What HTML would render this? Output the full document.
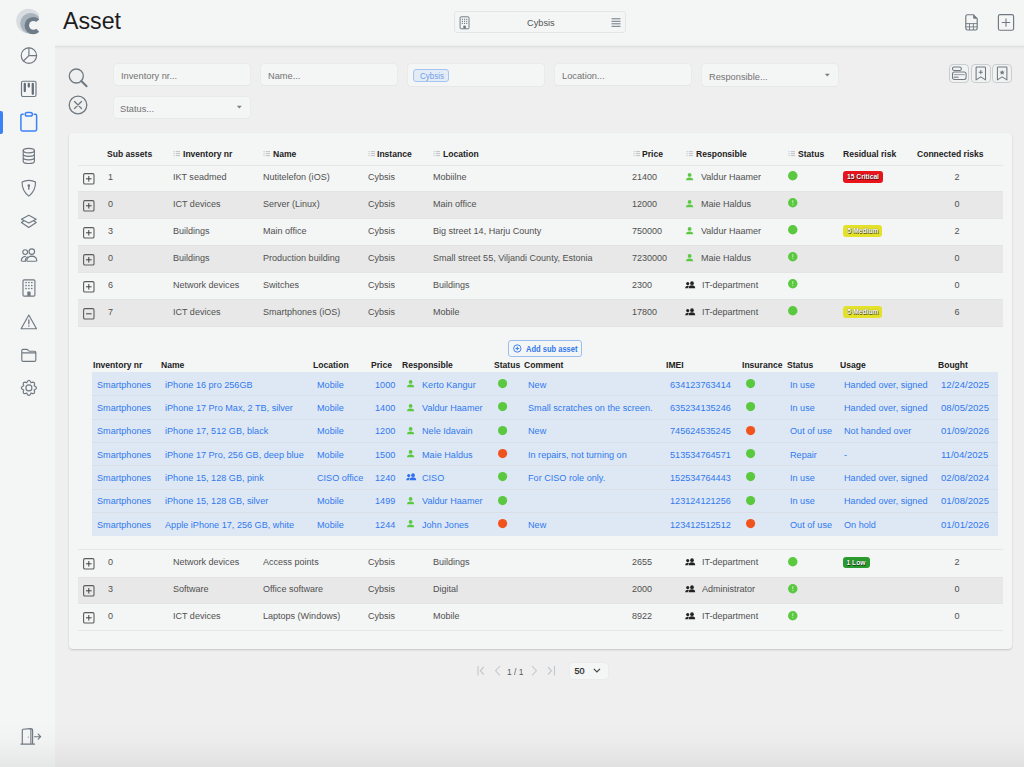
<!DOCTYPE html><html><head><meta charset="utf-8"><style>
html,body{margin:0;padding:0;}
body{width:1024px;height:767px;overflow:hidden;position:relative;background:#efefef;font-family:"Liberation Sans", sans-serif;}
.t{position:absolute;white-space:nowrap;line-height:1;}
svg{display:block}
</style></head><body>
<div style="position:absolute;left:0px;top:0px;width:1024px;height:46.5px;background:#f4f5f5;"></div>
<div style="position:absolute;left:55px;top:43px;width:969px;height:6px;background:linear-gradient(rgba(0,0,0,0) 0%,rgba(0,0,0,0.02) 40%,#dfdfdf 58%,#eaeaea 80%,rgba(239,239,239,0) 100%);"></div>
<div style="position:absolute;left:0px;top:0px;width:55px;height:767px;background:#f4f5f5;"></div>
<div style="position:absolute;left:0px;top:722px;width:1024px;height:45px;background:linear-gradient(rgba(0,0,0,0),rgba(0,0,0,0.012) 40%,rgba(0,0,0,0.06));"></div>
<svg style="position:absolute;left:0px;top:0px;overflow:visible" width="55" height="46" viewBox="0 0 55 46">
<defs><clipPath id="lc"><rect x="0" y="0" width="38.9" height="46"/></clipPath></defs>
<g clip-path="url(#lc)">
<circle cx="28.5" cy="21" r="12.3" fill="#d9dde1"/>
<circle cx="30.6" cy="23.3" r="10.4" fill="#a9b3bc"/>
<circle cx="33.2" cy="25.6" r="8.6" fill="#6e7c89"/>
<circle cx="33.4" cy="25.4" r="4.3" fill="#f4f5f5"/>
<polygon points="33.4,25.4 36.6,21.6 39.5,19.4 39.5,31.9 36.8,29.2" fill="#f4f5f5"/>
</g></svg>
<div style="position:absolute;left:0px;top:111px;width:3px;height:23px;background:#3b82f6;border-radius:0 2px 2px 0;"></div>
<svg style="position:absolute;left:20px;top:47px;overflow:visible" width="18" height="18" viewBox="0 0 18 18"><g fill="none" stroke="#6f7981" stroke-width="1.15" stroke-linecap="round" stroke-linejoin="round"><circle cx="8.9" cy="8.6" r="7.7"/><path d="M8.9 0.9V8.6H16.6M8.9 8.6L3.4 14"/></g></svg>
<svg style="position:absolute;left:20px;top:80px;overflow:visible" width="18" height="18" viewBox="0 0 18 18"><g fill="none" stroke="#6f7981" stroke-width="1.15" stroke-linecap="round" stroke-linejoin="round"><rect x="1.5" y="1.2" width="14.5" height="15.3" rx="1.5"/></g><g stroke="#66707a" stroke-width="2.3" stroke-linecap="round"><path d="M4.8 3.9V11M8.8 3.9V6.6M12.8 3.9V13.8"/></g></svg>
<svg style="position:absolute;left:19px;top:111px;overflow:visible" width="20" height="22" viewBox="0 0 20 22"><g fill="none" stroke="#3b82f6" stroke-width="1.5" stroke-linecap="round" stroke-linejoin="round"><path d="M4.2 3.2H3.2Q1.9 3.2 1.9 4.6V18.6Q1.9 20 3.3 20H16.2Q17.6 20 17.6 18.6V4.6Q17.6 3.2 16.3 3.2H15.2"/><rect x="6.2" y="1.4" width="7.2" height="3.6" rx="1.8"/></g></svg>
<svg style="position:absolute;left:20px;top:146px;overflow:visible" width="18" height="20" viewBox="0 0 18 20"><g fill="none" stroke="#6f7981" stroke-width="1.15" stroke-linecap="round" stroke-linejoin="round"><ellipse cx="8.8" cy="4.6" rx="5.6" ry="2.3"/><path d="M3.2 4.6V15.2Q3.2 17.5 8.8 17.5Q14.4 17.5 14.4 15.2V4.6M3.2 8.1Q3.2 10.4 8.8 10.4Q14.4 10.4 14.4 8.1M3.2 11.6Q3.2 13.9 8.8 13.9Q14.4 13.9 14.4 11.6"/></g></svg>
<svg style="position:absolute;left:20px;top:178px;overflow:visible" width="18" height="20" viewBox="0 0 18 20"><g fill="none" stroke="#6f7981" stroke-width="1.15" stroke-linecap="round" stroke-linejoin="round"><path d="M8.8 2.3Q12.5 2.3 15.5 4Q15.8 12.6 8.8 18.1Q1.8 12.6 2.1 4Q5.1 2.3 8.8 2.3Z"/></g><circle cx="8.8" cy="7.6" r="1.3" fill="#6f7981"/><rect x="8.1" y="7.8" width="1.4" height="4" rx="0.6" fill="#6f7981"/></svg>
<svg style="position:absolute;left:20px;top:213px;overflow:visible" width="18" height="18" viewBox="0 0 18 18"><g fill="none" stroke="#6f7981" stroke-width="1.15" stroke-linecap="round" stroke-linejoin="round"><path d="M8.8 2.3L16.2 6.2L8.8 10.1L1.4 6.2Z"/><path d="M3.6 7.9L1.4 9.4L8.8 14.4L16.2 9.4L14 7.9"/></g></svg>
<svg style="position:absolute;left:20px;top:246px;overflow:visible" width="18" height="18" viewBox="0 0 18 18"><g fill="none" stroke="#6f7981" stroke-width="1.15" stroke-linecap="round" stroke-linejoin="round"><circle cx="5.2" cy="6.1" r="2.4"/><circle cx="11.8" cy="5.6" r="2.8"/><path d="M5.4 10.4Q1.9 10.7 1.3 14.1Q1.2 15.2 2.3 15.2H5.6Q5 14.2 5.6 13Q6.2 11.4 7.2 10.9"/><path d="M7.6 15.2H15.8Q16.9 15.2 16.8 14.1Q16.1 10.2 11.8 10.1Q7.5 10.2 6.8 14.1Q6.7 15.2 7.6 15.2Z"/></g></svg>
<svg style="position:absolute;left:20px;top:278px;overflow:visible" width="18" height="20" viewBox="0 0 18 20"><g fill="none" stroke="#6f7981" stroke-width="1.15" stroke-linecap="round" stroke-linejoin="round"><rect x="3" y="1.8" width="11.9" height="16.3" rx="1.1"/></g><g fill="#6f7981"><rect x="5.30" y="3.90" width="1.5" height="1.3"/><rect x="5.30" y="6.90" width="1.5" height="1.3"/><rect x="5.30" y="9.90" width="1.5" height="1.3"/><rect x="8.15" y="3.90" width="1.5" height="1.3"/><rect x="8.15" y="6.90" width="1.5" height="1.3"/><rect x="8.15" y="9.90" width="1.5" height="1.3"/><rect x="11.00" y="3.90" width="1.5" height="1.3"/><rect x="11.00" y="6.90" width="1.5" height="1.3"/><rect x="11.00" y="9.90" width="1.5" height="1.3"/><rect x="7.3" y="13.6" width="3.3" height="4.3"/></g></svg>
<svg style="position:absolute;left:20px;top:313px;overflow:visible" width="18" height="18" viewBox="0 0 18 18"><g fill="none" stroke="#6f7981" stroke-width="1.15" stroke-linecap="round" stroke-linejoin="round"><path d="M8.8 2L16.5 15.7H1.1Z"/></g><rect x="8.2" y="6.2" width="1.3" height="5.2" rx="0.6" fill="#6f7981"/><circle cx="8.85" cy="13" r="0.8" fill="#6f7981"/></svg>
<svg style="position:absolute;left:20px;top:347px;overflow:visible" width="18" height="16" viewBox="0 0 18 16"><g fill="none" stroke="#6f7981" stroke-width="1.15" stroke-linecap="round" stroke-linejoin="round"><path d="M1.8 3.6Q1.8 2.4 3 2.4H6.6Q7.5 2.4 8.4 3.6Q9 4.2 9.8 4.2H14.6Q15.8 4.2 15.8 5.4V13.2Q15.8 14.4 14.6 14.4H3Q1.8 14.4 1.8 13.2Z M1.8 5.8H15.8"/></g></svg>
<svg style="position:absolute;left:20px;top:379px;overflow:visible" width="18" height="18" viewBox="0 0 18 18"><g fill="none" stroke="#6f7981" stroke-width="1.15" stroke-linecap="round" stroke-linejoin="round"><path d="M8.90 1.30 L10.25 2.13 L11.04 3.73 L12.73 3.16 L14.27 3.53 L14.64 5.07 L14.07 6.76 L15.67 7.55 L16.50 8.90 L15.67 10.25 L14.07 11.04 L14.64 12.73 L14.27 14.27 L12.73 14.64 L11.04 14.07 L10.25 15.67 L8.90 16.50 L7.55 15.67 L6.76 14.07 L5.07 14.64 L3.53 14.27 L3.16 12.73 L3.73 11.04 L2.13 10.25 L1.30 8.90 L2.13 7.55 L3.73 6.76 L3.16 5.07 L3.53 3.53 L5.07 3.16 L6.76 3.73 L7.55 2.13Z"/><circle cx="8.9" cy="8.9" r="3"/></g></svg>
<svg style="position:absolute;left:19px;top:726px;overflow:visible" width="24" height="22" viewBox="0 0 24 22"><g fill="none" stroke="#6f7981" stroke-width="1.15" stroke-linecap="round" stroke-linejoin="round"><path d="M3.3 18.1V4Q3.3 3.4 3.9 3.3L11.6 2.6Q13.6 2.5 13.6 4.4V18.1M1.9 18.1H15.6M11.9 18.1V3.1"/><path d="M15.4 10.7H21.6M19.2 8.2L21.7 10.7L19.2 13.2"/></g><circle cx="9.3" cy="11" r="0.6" fill="#6f7981"/></svg>
<div class="t" style="left:63.0px;top:9.96px;font-size:23.2px;color:#1d1d1d;font-weight:400;">Asset</div>
<div style="position:absolute;left:454.3px;top:11.3px;width:172.2px;height:21.7px;background:#f4f5f5;border:1px solid #e3e5e6;border-radius:3px;box-sizing:border-box;"></div>
<svg style="position:absolute;left:459px;top:16px;overflow:visible" width="12" height="14" viewBox="0 0 12 14"><rect x="1.1" y="0.8" width="8.9" height="12" rx="0.9" fill="none" stroke="#6f7981" stroke-width="0.95"/><rect x="2.85" y="2.75" width="1.1" height="1.1" fill="#6f7981"/><rect x="2.85" y="4.80" width="1.1" height="1.1" fill="#6f7981"/><rect x="2.85" y="6.85" width="1.1" height="1.1" fill="#6f7981"/><rect x="5.00" y="2.75" width="1.1" height="1.1" fill="#6f7981"/><rect x="5.00" y="4.80" width="1.1" height="1.1" fill="#6f7981"/><rect x="5.00" y="6.85" width="1.1" height="1.1" fill="#6f7981"/><rect x="7.15" y="2.75" width="1.1" height="1.1" fill="#6f7981"/><rect x="7.15" y="4.80" width="1.1" height="1.1" fill="#6f7981"/><rect x="7.15" y="6.85" width="1.1" height="1.1" fill="#6f7981"/><path d="M4.3 12.4V10.6Q4.3 9.6 5.6 9.6Q6.9 9.6 6.9 10.6V12.4Z" fill="#6f7981"/></svg>
<div class="t" style="left:526.6px;top:17.70px;font-size:9.8px;color:#555;font-weight:400;transform:scaleX(0.94);transform-origin:0 0;">Cybsis</div>
<svg style="position:absolute;left:610px;top:17px;overflow:visible" width="12" height="12" viewBox="0 0 12 12"><g stroke="#6f7981" stroke-width="1"><path d="M1.5 1.8H10.5M1.5 4.3H10.5M1.5 6.8H10.5M1.5 9.3H10.5"/></g></svg>
<svg style="position:absolute;left:964px;top:13px;overflow:visible" width="16" height="19" viewBox="0 0 16 19"><g fill="none" stroke="#6f7981" stroke-width="1.15" stroke-linecap="round" stroke-linejoin="round"><path d="M1.8 3.4Q1.8 1.7 3.5 1.7H9.3L13.2 5.6V15.3Q13.2 17 11.5 17H3.5Q1.8 17 1.8 15.3Z"/></g><g fill="none" stroke="#6f7981" stroke-width="0.9"><path d="M1.8 10.6H13.2M1.8 13.9H13.2M5.5 10.6V17M9.4 10.6V17"/></g><path d="M9.1 1.8L13.1 5.8H10.4Q9.1 5.8 9.1 4.5Z" fill="#6f7981"/></svg>
<svg style="position:absolute;left:997px;top:13px;overflow:visible" width="19" height="19" viewBox="0 0 19 19"><g fill="none" stroke="#6f7981" stroke-width="1.15" stroke-linecap="round" stroke-linejoin="round"><rect x="1.4" y="1.6" width="15.2" height="15.6" rx="1.8"/></g><g stroke="#6f7981" stroke-width="1.05" stroke-linecap="round"><path d="M9 5.7V13.3M5.2 9.5H12.8"/></g></svg>
<svg style="position:absolute;left:66px;top:66px;overflow:visible" width="24" height="24" viewBox="0 0 24 24"><g fill="none" stroke="#6f7981" stroke-width="1.3" stroke-linecap="round"><circle cx="10.3" cy="10" r="7"/><path d="M15.3 15L20.6 20.3" stroke-width="2"/></g></svg>
<svg style="position:absolute;left:66px;top:94px;overflow:visible" width="24" height="24" viewBox="0 0 24 24"><g fill="none" stroke="#6f7981" stroke-width="1.3" stroke-linecap="round"><circle cx="12" cy="11" r="8.8"/><path d="M8.5 7.5L15.5 14.5M15.5 7.5L8.5 14.5"/></g></svg>
<div style="position:absolute;left:113.5px;top:63.8px;width:136.9px;height:21.5px;background:#f4f5f5;border-radius:3px;box-shadow:0 0 0 0.6px #e4e6e7, 0 1px 1px rgba(0,0,0,0.03);"></div>
<div class="t" style="left:120.5px;top:70.86px;font-size:9.5px;color:#737373;font-weight:400;transform:scaleX(0.975);transform-origin:0 0;">Inventory nr...</div>
<div style="position:absolute;left:260.5px;top:63.8px;width:136.9px;height:21.5px;background:#f4f5f5;border-radius:3px;box-shadow:0 0 0 0.6px #e4e6e7, 0 1px 1px rgba(0,0,0,0.03);"></div>
<div class="t" style="left:267.5px;top:70.86px;font-size:9.5px;color:#737373;font-weight:400;transform:scaleX(0.975);transform-origin:0 0;">Name...</div>
<div style="position:absolute;left:407.5px;top:63.8px;width:136.9px;height:22.4px;background:#f4f5f5;border-radius:3px;box-shadow:0 0 0 0.6px #e4e6e7, 0 1px 1px rgba(0,0,0,0.03);"></div>
<div style="position:absolute;left:554.5px;top:63.8px;width:136.9px;height:21.5px;background:#f4f5f5;border-radius:3px;box-shadow:0 0 0 0.6px #e4e6e7, 0 1px 1px rgba(0,0,0,0.03);"></div>
<div class="t" style="left:561.5px;top:70.86px;font-size:9.5px;color:#737373;font-weight:400;transform:scaleX(0.975);transform-origin:0 0;">Location...</div>
<div style="position:absolute;left:701.5px;top:63.8px;width:136.9px;height:22.4px;background:#f4f5f5;border-radius:3px;box-shadow:0 0 0 0.6px #e4e6e7, 0 1px 1px rgba(0,0,0,0.03);"></div>
<div class="t" style="left:708.5px;top:72.16px;font-size:9.5px;color:#737373;font-weight:400;transform:scaleX(0.975);transform-origin:0 0;">Responsible...</div>
<div style="position:absolute;left:413.2px;top:68.7px;width:35.8px;height:13.5px;background:#e3ebf7;border:1px solid #a6c4f0;border-radius:3px;box-sizing:border-box;"></div>
<div class="t" style="left:419.6px;top:71.84px;font-size:8.7px;color:#6f9fea;font-weight:400;transform:scaleX(0.92);transform-origin:0 0;">Cybsis</div>
<svg style="position:absolute;left:823.6px;top:72.6px;overflow:visible" width="8" height="5" viewBox="0 0 8 5"><path d="M0.8 0.8L3.3 3.4L5.8 0.8Z" fill="#808080"/></svg>
<div style="position:absolute;left:113.5px;top:96.5px;width:136.9px;height:21.8px;background:#f4f5f5;border-radius:3px;box-shadow:0 0 0 0.6px #e4e6e7, 0 1px 1px rgba(0,0,0,0.03);"></div>
<div class="t" style="left:119.8px;top:104.26px;font-size:9.5px;color:#737373;font-weight:400;transform:scaleX(0.975);transform-origin:0 0;">Status...</div>
<svg style="position:absolute;left:236.4px;top:104.6px;overflow:visible" width="8" height="5" viewBox="0 0 8 5"><path d="M0.8 0.8L3.3 3.4L5.8 0.8Z" fill="#808080"/></svg>
<div style="position:absolute;left:949.3px;top:63.5px;width:19.4px;height:19.4px;border:1px solid #c9cdd1;border-radius:4px;box-sizing:border-box;background:#f1f2f2;"></div>
<div style="position:absolute;left:971px;top:63.5px;width:20px;height:19.4px;border:1px solid #c9cdd1;border-radius:4px;box-sizing:border-box;background:#f1f2f2;"></div>
<div style="position:absolute;left:992px;top:63.5px;width:20px;height:19.4px;border:1px solid #c9cdd1;border-radius:4px;box-sizing:border-box;background:#f1f2f2;"></div>
<svg style="position:absolute;left:951px;top:65px;overflow:visible" width="16" height="16" viewBox="0 0 16 16"><g fill="none" stroke="#6f7981" stroke-width="1.05"><rect x="1.5" y="2" width="8.8" height="3.4" rx="1.5"/><rect x="1.5" y="7" width="13.6" height="7.5" rx="2"/><path d="M2.8 9.6H13.8" stroke="#9aa2a9"/><path d="M2.8 12.2H7.5"/></g></svg>
<svg style="position:absolute;left:973px;top:65px;overflow:visible" width="16" height="16" viewBox="0 0 16 16"><g fill="none" stroke="#6f7981" stroke-width="1.05" stroke-linejoin="round"><path d="M3.1 2.6Q3.1 1.9 3.8 1.9H11.8Q12.5 1.9 12.5 2.6V14.9L7.8 11.9L3.1 14.9Z"/><path d="M7.8 5.1V9.3M5.7 7.2H9.9"/></g></svg>
<svg style="position:absolute;left:994px;top:65px;overflow:visible" width="16" height="16" viewBox="0 0 16 16"><g fill="none" stroke="#6f7981" stroke-width="1.05" stroke-linejoin="round"><path d="M3.4 2.6Q3.4 1.9 4.1 1.9H12.2Q12.9 1.9 12.9 2.6V14.9L8.15 11.9L3.4 14.9Z"/></g><path d="M8.15 4.9L8.9 6.6L10.7 6.7L9.3 7.9L9.8 9.7L8.15 8.7L6.5 9.7L7 7.9L5.6 6.7L7.4 6.6Z" fill="#6f7981"/></svg>
<div style="position:absolute;left:69px;top:133px;width:943px;height:516px;background:#f4f5f5;border-radius:4px;box-shadow:0 1px 2px rgba(0,0,0,0.18);"></div>
<div class="t" style="left:107.4px;top:149.88px;font-size:9px;color:#222;font-weight:700;transform:scaleX(0.95);transform-origin:0 0;">Sub assets</div>
<svg style="position:absolute;left:172.8px;top:151.2px;overflow:visible" width="8" height="6" viewBox="0 0 8 6"><g stroke="#b9bec3" stroke-width="0.9"><path d="M0.5 0.6H1.6M0.5 2.6H1.6M0.5 4.6H1.6M2.8 0.6H7M2.8 2.6H7M2.8 4.6H7"/></g></svg>
<div class="t" style="left:182.6px;top:149.88px;font-size:9px;color:#222;font-weight:700;transform:scaleX(0.95);transform-origin:0 0;">Inventory nr</div>
<svg style="position:absolute;left:263px;top:151.2px;overflow:visible" width="8" height="6" viewBox="0 0 8 6"><g stroke="#b9bec3" stroke-width="0.9"><path d="M0.5 0.6H1.6M0.5 2.6H1.6M0.5 4.6H1.6M2.8 0.6H7M2.8 2.6H7M2.8 4.6H7"/></g></svg>
<div class="t" style="left:273.4px;top:149.88px;font-size:9px;color:#222;font-weight:700;transform:scaleX(0.95);transform-origin:0 0;">Name</div>
<svg style="position:absolute;left:367.6px;top:151.2px;overflow:visible" width="8" height="6" viewBox="0 0 8 6"><g stroke="#b9bec3" stroke-width="0.9"><path d="M0.5 0.6H1.6M0.5 2.6H1.6M0.5 4.6H1.6M2.8 0.6H7M2.8 2.6H7M2.8 4.6H7"/></g></svg>
<div class="t" style="left:377.4px;top:149.88px;font-size:9px;color:#222;font-weight:700;transform:scaleX(0.95);transform-origin:0 0;">Instance</div>
<svg style="position:absolute;left:433px;top:151.2px;overflow:visible" width="8" height="6" viewBox="0 0 8 6"><g stroke="#b9bec3" stroke-width="0.9"><path d="M0.5 0.6H1.6M0.5 2.6H1.6M0.5 4.6H1.6M2.8 0.6H7M2.8 2.6H7M2.8 4.6H7"/></g></svg>
<div class="t" style="left:442.8px;top:149.88px;font-size:9px;color:#222;font-weight:700;transform:scaleX(0.95);transform-origin:0 0;">Location</div>
<svg style="position:absolute;left:632.6px;top:151.2px;overflow:visible" width="8" height="6" viewBox="0 0 8 6"><g stroke="#b9bec3" stroke-width="0.9"><path d="M0.5 0.6H1.6M0.5 2.6H1.6M0.5 4.6H1.6M2.8 0.6H7M2.8 2.6H7M2.8 4.6H7"/></g></svg>
<div class="t" style="left:642.0px;top:149.88px;font-size:9px;color:#222;font-weight:700;transform:scaleX(0.95);transform-origin:0 0;">Price</div>
<svg style="position:absolute;left:686px;top:151.2px;overflow:visible" width="8" height="6" viewBox="0 0 8 6"><g stroke="#b9bec3" stroke-width="0.9"><path d="M0.5 0.6H1.6M0.5 2.6H1.6M0.5 4.6H1.6M2.8 0.6H7M2.8 2.6H7M2.8 4.6H7"/></g></svg>
<div class="t" style="left:695.5px;top:149.88px;font-size:9px;color:#222;font-weight:700;transform:scaleX(0.95);transform-origin:0 0;">Responsible</div>
<svg style="position:absolute;left:788px;top:151.2px;overflow:visible" width="8" height="6" viewBox="0 0 8 6"><g stroke="#b9bec3" stroke-width="0.9"><path d="M0.5 0.6H1.6M0.5 2.6H1.6M0.5 4.6H1.6M2.8 0.6H7M2.8 2.6H7M2.8 4.6H7"/></g></svg>
<div class="t" style="left:797.6px;top:149.88px;font-size:9px;color:#222;font-weight:700;transform:scaleX(0.95);transform-origin:0 0;">Status</div>
<div class="t" style="left:842.5px;top:149.88px;font-size:9px;color:#222;font-weight:700;transform:scaleX(0.95);transform-origin:0 0;">Residual risk</div>
<div class="t" style="left:917.0px;top:149.88px;font-size:9px;color:#222;font-weight:700;transform:scaleX(0.95);transform-origin:0 0;">Connected risks</div>
<div style="position:absolute;left:78px;top:164.8px;width:925px;height:1px;background:#e4e6e7;"></div>
<svg style="position:absolute;left:82.8px;top:172.7px;overflow:visible" width="12" height="12" viewBox="0 0 12 12"><rect x="0.6" y="0.6" width="10.4" height="10.4" rx="1.3" fill="none" stroke="#5c5c5c" stroke-width="1.1"/><path d="M3 5.8H8.6" stroke="#3a3a3a" stroke-width="0.95"/><path d="M5.8 3V8.6" stroke="#3a3a3a" stroke-width="0.95"/></svg>
<div class="t" style="left:107.6px;top:172.17px;font-size:9.6px;color:#505050;font-weight:400;transform:scaleX(0.94);transform-origin:0 0;">1</div>
<div class="t" style="left:172.8px;top:172.17px;font-size:9.6px;color:#505050;font-weight:400;transform:scaleX(0.94);transform-origin:0 0;">IKT seadmed</div>
<div class="t" style="left:263.0px;top:172.17px;font-size:9.6px;color:#505050;font-weight:400;transform:scaleX(0.94);transform-origin:0 0;">Nutitelefon (iOS)</div>
<div class="t" style="left:367.6px;top:172.17px;font-size:9.6px;color:#505050;font-weight:400;transform:scaleX(0.94);transform-origin:0 0;">Cybsis</div>
<div class="t" style="left:433.0px;top:172.17px;font-size:9.6px;color:#505050;font-weight:400;transform:scaleX(0.94);transform-origin:0 0;">Mobiilne</div>
<div class="t" style="left:632.4px;top:172.17px;font-size:9.6px;color:#505050;font-weight:400;transform:scaleX(0.94);transform-origin:0 0;">21400</div>
<svg style="position:absolute;left:686.4px;top:173.2px;overflow:visible" width="8" height="8" viewBox="0 0 8 8"><circle cx="3.6" cy="1.9" r="1.9" fill="#5bc940"/><path d="M0 7.2Q0 4.6 3.6 4.5Q7.2 4.6 7.2 7.2Z" fill="#5bc940"/></svg>
<div class="t" style="left:701.0px;top:172.17px;font-size:9.6px;color:#505050;font-weight:400;transform:scaleX(0.94);transform-origin:0 0;">Valdur Haamer</div>
<svg style="position:absolute;left:787.55px;top:171.45px;overflow:visible" width="9.5" height="9.5" viewBox="0 0 9.5 9.5"><circle cx="4.75" cy="4.75" r="4.75" fill="#5bc940"/></svg>
<div style="position:absolute;left:842.7px;top:171.1px;width:40.4px;height:11.8px;background:#e8141b;border-radius:3px;"></div>
<div class="t" style="left:812.9px;width:100px;text-align:center;top:173.37px;font-size:7.6px;color:#fff;font-weight:700;transform:scaleX(0.88);transform-origin:50% 0;text-shadow:0 0 1px rgba(0,0,0,0.7),0.5px 0.5px 0.5px rgba(0,0,0,0.6);">15 Critical</div>
<div class="t" style="left:907.3px;width:100px;text-align:center;top:172.17px;font-size:9.6px;color:#505050;font-weight:400;transform:scaleX(0.94);transform-origin:50% 0;">2</div>
<div style="position:absolute;left:78px;top:191px;width:925px;height:27.5px;background:#e8e8e8;box-shadow:inset 0 1px 0 #e3e3e3, inset 0 -1px 0 #e4e4e4;"></div>
<svg style="position:absolute;left:82.8px;top:199.7px;overflow:visible" width="12" height="12" viewBox="0 0 12 12"><rect x="0.6" y="0.6" width="10.4" height="10.4" rx="1.3" fill="none" stroke="#5c5c5c" stroke-width="1.1"/><path d="M3 5.8H8.6" stroke="#3a3a3a" stroke-width="0.95"/><path d="M5.8 3V8.6" stroke="#3a3a3a" stroke-width="0.95"/></svg>
<div class="t" style="left:107.6px;top:199.17px;font-size:9.6px;color:#505050;font-weight:400;transform:scaleX(0.94);transform-origin:0 0;">0</div>
<div class="t" style="left:172.8px;top:199.17px;font-size:9.6px;color:#505050;font-weight:400;transform:scaleX(0.94);transform-origin:0 0;">ICT devices</div>
<div class="t" style="left:263.0px;top:199.17px;font-size:9.6px;color:#505050;font-weight:400;transform:scaleX(0.94);transform-origin:0 0;">Server (Linux)</div>
<div class="t" style="left:367.6px;top:199.17px;font-size:9.6px;color:#505050;font-weight:400;transform:scaleX(0.94);transform-origin:0 0;">Cybsis</div>
<div class="t" style="left:433.0px;top:199.17px;font-size:9.6px;color:#505050;font-weight:400;transform:scaleX(0.94);transform-origin:0 0;">Main office</div>
<div class="t" style="left:632.4px;top:199.17px;font-size:9.6px;color:#505050;font-weight:400;transform:scaleX(0.94);transform-origin:0 0;">12000</div>
<svg style="position:absolute;left:686.4px;top:200.2px;overflow:visible" width="8" height="8" viewBox="0 0 8 8"><circle cx="3.6" cy="1.9" r="1.9" fill="#5bc940"/><path d="M0 7.2Q0 4.6 3.6 4.5Q7.2 4.6 7.2 7.2Z" fill="#5bc940"/></svg>
<div class="t" style="left:701.0px;top:199.17px;font-size:9.6px;color:#505050;font-weight:400;transform:scaleX(0.94);transform-origin:0 0;">Maie Haldus</div>
<svg style="position:absolute;left:787.55px;top:198.45px;overflow:visible" width="9.5" height="9.5" viewBox="0 0 9.5 9.5"><circle cx="4.75" cy="4.75" r="4.75" fill="#5bc940"/><rect x="4.25" y="2.15" width="1" height="3" fill="#fff" opacity="0.6"/><rect x="4.25" y="6.05" width="1" height="1" fill="#fff" opacity="0.6"/></svg>
<div class="t" style="left:907.3px;width:100px;text-align:center;top:199.17px;font-size:9.6px;color:#505050;font-weight:400;transform:scaleX(0.94);transform-origin:50% 0;">0</div>
<svg style="position:absolute;left:82.8px;top:226.7px;overflow:visible" width="12" height="12" viewBox="0 0 12 12"><rect x="0.6" y="0.6" width="10.4" height="10.4" rx="1.3" fill="none" stroke="#5c5c5c" stroke-width="1.1"/><path d="M3 5.8H8.6" stroke="#3a3a3a" stroke-width="0.95"/><path d="M5.8 3V8.6" stroke="#3a3a3a" stroke-width="0.95"/></svg>
<div class="t" style="left:107.6px;top:226.17px;font-size:9.6px;color:#505050;font-weight:400;transform:scaleX(0.94);transform-origin:0 0;">3</div>
<div class="t" style="left:172.8px;top:226.17px;font-size:9.6px;color:#505050;font-weight:400;transform:scaleX(0.94);transform-origin:0 0;">Buildings</div>
<div class="t" style="left:263.0px;top:226.17px;font-size:9.6px;color:#505050;font-weight:400;transform:scaleX(0.94);transform-origin:0 0;">Main office</div>
<div class="t" style="left:367.6px;top:226.17px;font-size:9.6px;color:#505050;font-weight:400;transform:scaleX(0.94);transform-origin:0 0;">Cybsis</div>
<div class="t" style="left:433.0px;top:226.17px;font-size:9.6px;color:#505050;font-weight:400;transform:scaleX(0.94);transform-origin:0 0;">Big street 14, Harju County</div>
<div class="t" style="left:632.4px;top:226.17px;font-size:9.6px;color:#505050;font-weight:400;transform:scaleX(0.94);transform-origin:0 0;">750000</div>
<svg style="position:absolute;left:686.4px;top:227.2px;overflow:visible" width="8" height="8" viewBox="0 0 8 8"><circle cx="3.6" cy="1.9" r="1.9" fill="#5bc940"/><path d="M0 7.2Q0 4.6 3.6 4.5Q7.2 4.6 7.2 7.2Z" fill="#5bc940"/></svg>
<div class="t" style="left:701.0px;top:226.17px;font-size:9.6px;color:#505050;font-weight:400;transform:scaleX(0.94);transform-origin:0 0;">Valdur Haamer</div>
<svg style="position:absolute;left:787.55px;top:225.45px;overflow:visible" width="9.5" height="9.5" viewBox="0 0 9.5 9.5"><circle cx="4.75" cy="4.75" r="4.75" fill="#5bc940"/></svg>
<div style="position:absolute;left:842.7px;top:225.1px;width:39.7px;height:11.8px;background:#e4e12b;border-radius:3px;"></div>
<div class="t" style="left:812.6px;width:100px;text-align:center;top:227.37px;font-size:7.6px;color:#fff;font-weight:700;transform:scaleX(0.88);transform-origin:50% 0;text-shadow:0 0 1px rgba(0,0,0,0.7),0.5px 0.5px 0.5px rgba(0,0,0,0.6);">5 Medium</div>
<div class="t" style="left:907.3px;width:100px;text-align:center;top:226.17px;font-size:9.6px;color:#505050;font-weight:400;transform:scaleX(0.94);transform-origin:50% 0;">2</div>
<div style="position:absolute;left:78px;top:245px;width:925px;height:27.5px;background:#e8e8e8;box-shadow:inset 0 1px 0 #e3e3e3, inset 0 -1px 0 #e4e4e4;"></div>
<svg style="position:absolute;left:82.8px;top:253.7px;overflow:visible" width="12" height="12" viewBox="0 0 12 12"><rect x="0.6" y="0.6" width="10.4" height="10.4" rx="1.3" fill="none" stroke="#5c5c5c" stroke-width="1.1"/><path d="M3 5.8H8.6" stroke="#3a3a3a" stroke-width="0.95"/><path d="M5.8 3V8.6" stroke="#3a3a3a" stroke-width="0.95"/></svg>
<div class="t" style="left:107.6px;top:253.17px;font-size:9.6px;color:#505050;font-weight:400;transform:scaleX(0.94);transform-origin:0 0;">0</div>
<div class="t" style="left:172.8px;top:253.17px;font-size:9.6px;color:#505050;font-weight:400;transform:scaleX(0.94);transform-origin:0 0;">Buildings</div>
<div class="t" style="left:263.0px;top:253.17px;font-size:9.6px;color:#505050;font-weight:400;transform:scaleX(0.94);transform-origin:0 0;">Production building</div>
<div class="t" style="left:367.6px;top:253.17px;font-size:9.6px;color:#505050;font-weight:400;transform:scaleX(0.94);transform-origin:0 0;">Cybsis</div>
<div class="t" style="left:433.0px;top:253.17px;font-size:9.6px;color:#505050;font-weight:400;transform:scaleX(0.94);transform-origin:0 0;">Small street 55, Viljandi County, Estonia</div>
<div class="t" style="left:632.4px;top:253.17px;font-size:9.6px;color:#505050;font-weight:400;transform:scaleX(0.94);transform-origin:0 0;">7230000</div>
<svg style="position:absolute;left:686.4px;top:254.2px;overflow:visible" width="8" height="8" viewBox="0 0 8 8"><circle cx="3.6" cy="1.9" r="1.9" fill="#5bc940"/><path d="M0 7.2Q0 4.6 3.6 4.5Q7.2 4.6 7.2 7.2Z" fill="#5bc940"/></svg>
<div class="t" style="left:701.0px;top:253.17px;font-size:9.6px;color:#505050;font-weight:400;transform:scaleX(0.94);transform-origin:0 0;">Maie Haldus</div>
<svg style="position:absolute;left:787.55px;top:252.45px;overflow:visible" width="9.5" height="9.5" viewBox="0 0 9.5 9.5"><circle cx="4.75" cy="4.75" r="4.75" fill="#5bc940"/><rect x="4.25" y="2.15" width="1" height="3" fill="#fff" opacity="0.6"/><rect x="4.25" y="6.05" width="1" height="1" fill="#fff" opacity="0.6"/></svg>
<div class="t" style="left:907.3px;width:100px;text-align:center;top:253.17px;font-size:9.6px;color:#505050;font-weight:400;transform:scaleX(0.94);transform-origin:50% 0;">0</div>
<svg style="position:absolute;left:82.8px;top:280.7px;overflow:visible" width="12" height="12" viewBox="0 0 12 12"><rect x="0.6" y="0.6" width="10.4" height="10.4" rx="1.3" fill="none" stroke="#5c5c5c" stroke-width="1.1"/><path d="M3 5.8H8.6" stroke="#3a3a3a" stroke-width="0.95"/><path d="M5.8 3V8.6" stroke="#3a3a3a" stroke-width="0.95"/></svg>
<div class="t" style="left:107.6px;top:280.17px;font-size:9.6px;color:#505050;font-weight:400;transform:scaleX(0.94);transform-origin:0 0;">6</div>
<div class="t" style="left:172.8px;top:280.17px;font-size:9.6px;color:#505050;font-weight:400;transform:scaleX(0.94);transform-origin:0 0;">Network devices</div>
<div class="t" style="left:263.0px;top:280.17px;font-size:9.6px;color:#505050;font-weight:400;transform:scaleX(0.94);transform-origin:0 0;">Switches</div>
<div class="t" style="left:367.6px;top:280.17px;font-size:9.6px;color:#505050;font-weight:400;transform:scaleX(0.94);transform-origin:0 0;">Cybsis</div>
<div class="t" style="left:433.0px;top:280.17px;font-size:9.6px;color:#505050;font-weight:400;transform:scaleX(0.94);transform-origin:0 0;">Buildings</div>
<div class="t" style="left:632.4px;top:280.17px;font-size:9.6px;color:#505050;font-weight:400;transform:scaleX(0.94);transform-origin:0 0;">2300</div>
<svg style="position:absolute;left:685px;top:280.5px;overflow:visible" width="11" height="8" viewBox="0 0 11 8"><g fill="#222"><circle cx="2.7" cy="2.6" r="1.55"/><circle cx="7" cy="2.2" r="1.85"/><path d="M3.5 7.2Q3.5 4.4 6.9 4.3Q10.2 4.4 10.2 7.2Z"/><path d="M0.1 7.2Q0.1 4.8 2.6 4.7Q3.5 4.7 4.1 5Q2.7 5.8 2.8 7.2Z"/></g></svg>
<div class="t" style="left:701.8px;top:280.17px;font-size:9.6px;color:#505050;font-weight:400;transform:scaleX(0.94);transform-origin:0 0;">IT-department</div>
<svg style="position:absolute;left:787.55px;top:279.45px;overflow:visible" width="9.5" height="9.5" viewBox="0 0 9.5 9.5"><circle cx="4.75" cy="4.75" r="4.75" fill="#5bc940"/><rect x="4.25" y="2.15" width="1" height="3" fill="#fff" opacity="0.6"/><rect x="4.25" y="6.05" width="1" height="1" fill="#fff" opacity="0.6"/></svg>
<div class="t" style="left:907.3px;width:100px;text-align:center;top:280.17px;font-size:9.6px;color:#505050;font-weight:400;transform:scaleX(0.94);transform-origin:50% 0;">0</div>
<div style="position:absolute;left:78px;top:299px;width:925px;height:27.5px;background:#e8e8e8;box-shadow:inset 0 1px 0 #e3e3e3, inset 0 -1px 0 #e4e4e4;"></div>
<svg style="position:absolute;left:82.8px;top:307.7px;overflow:visible" width="12" height="12" viewBox="0 0 12 12"><rect x="0.6" y="0.6" width="10.4" height="10.4" rx="1.3" fill="none" stroke="#5c5c5c" stroke-width="1.1"/><path d="M3 5.8H8.6" stroke="#3a3a3a" stroke-width="0.95"/></svg>
<div class="t" style="left:107.6px;top:307.17px;font-size:9.6px;color:#505050;font-weight:400;transform:scaleX(0.94);transform-origin:0 0;">7</div>
<div class="t" style="left:172.8px;top:307.17px;font-size:9.6px;color:#505050;font-weight:400;transform:scaleX(0.94);transform-origin:0 0;">ICT devices</div>
<div class="t" style="left:263.0px;top:307.17px;font-size:9.6px;color:#505050;font-weight:400;transform:scaleX(0.94);transform-origin:0 0;">Smartphones (iOS)</div>
<div class="t" style="left:367.6px;top:307.17px;font-size:9.6px;color:#505050;font-weight:400;transform:scaleX(0.94);transform-origin:0 0;">Cybsis</div>
<div class="t" style="left:433.0px;top:307.17px;font-size:9.6px;color:#505050;font-weight:400;transform:scaleX(0.94);transform-origin:0 0;">Mobile</div>
<div class="t" style="left:632.4px;top:307.17px;font-size:9.6px;color:#505050;font-weight:400;transform:scaleX(0.94);transform-origin:0 0;">17800</div>
<svg style="position:absolute;left:685px;top:307.5px;overflow:visible" width="11" height="8" viewBox="0 0 11 8"><g fill="#222"><circle cx="2.7" cy="2.6" r="1.55"/><circle cx="7" cy="2.2" r="1.85"/><path d="M3.5 7.2Q3.5 4.4 6.9 4.3Q10.2 4.4 10.2 7.2Z"/><path d="M0.1 7.2Q0.1 4.8 2.6 4.7Q3.5 4.7 4.1 5Q2.7 5.8 2.8 7.2Z"/></g></svg>
<div class="t" style="left:701.8px;top:307.17px;font-size:9.6px;color:#505050;font-weight:400;transform:scaleX(0.94);transform-origin:0 0;">IT-department</div>
<svg style="position:absolute;left:787.55px;top:306.45px;overflow:visible" width="9.5" height="9.5" viewBox="0 0 9.5 9.5"><circle cx="4.75" cy="4.75" r="4.75" fill="#5bc940"/></svg>
<div style="position:absolute;left:842.7px;top:306.1px;width:39.7px;height:11.8px;background:#e4e12b;border-radius:3px;"></div>
<div class="t" style="left:812.6px;width:100px;text-align:center;top:308.37px;font-size:7.6px;color:#fff;font-weight:700;transform:scaleX(0.88);transform-origin:50% 0;text-shadow:0 0 1px rgba(0,0,0,0.7),0.5px 0.5px 0.5px rgba(0,0,0,0.6);">5 Medium</div>
<div class="t" style="left:907.3px;width:100px;text-align:center;top:307.17px;font-size:9.6px;color:#505050;font-weight:400;transform:scaleX(0.94);transform-origin:50% 0;">6</div>
<svg style="position:absolute;left:82.8px;top:558.2px;overflow:visible" width="12" height="12" viewBox="0 0 12 12"><rect x="0.6" y="0.6" width="10.4" height="10.4" rx="1.3" fill="none" stroke="#5c5c5c" stroke-width="1.1"/><path d="M3 5.8H8.6" stroke="#3a3a3a" stroke-width="0.95"/><path d="M5.8 3V8.6" stroke="#3a3a3a" stroke-width="0.95"/></svg>
<div class="t" style="left:107.6px;top:556.97px;font-size:9.6px;color:#505050;font-weight:400;transform:scaleX(0.94);transform-origin:0 0;">0</div>
<div class="t" style="left:172.8px;top:556.97px;font-size:9.6px;color:#505050;font-weight:400;transform:scaleX(0.94);transform-origin:0 0;">Network devices</div>
<div class="t" style="left:263.0px;top:556.97px;font-size:9.6px;color:#505050;font-weight:400;transform:scaleX(0.94);transform-origin:0 0;">Access points</div>
<div class="t" style="left:367.6px;top:556.97px;font-size:9.6px;color:#505050;font-weight:400;transform:scaleX(0.94);transform-origin:0 0;">Cybsis</div>
<div class="t" style="left:433.0px;top:556.97px;font-size:9.6px;color:#505050;font-weight:400;transform:scaleX(0.94);transform-origin:0 0;">Buildings</div>
<div class="t" style="left:632.4px;top:556.97px;font-size:9.6px;color:#505050;font-weight:400;transform:scaleX(0.94);transform-origin:0 0;">2655</div>
<svg style="position:absolute;left:685px;top:558.0px;overflow:visible" width="11" height="8" viewBox="0 0 11 8"><g fill="#222"><circle cx="2.7" cy="2.6" r="1.55"/><circle cx="7" cy="2.2" r="1.85"/><path d="M3.5 7.2Q3.5 4.4 6.9 4.3Q10.2 4.4 10.2 7.2Z"/><path d="M0.1 7.2Q0.1 4.8 2.6 4.7Q3.5 4.7 4.1 5Q2.7 5.8 2.8 7.2Z"/></g></svg>
<div class="t" style="left:701.8px;top:556.97px;font-size:9.6px;color:#505050;font-weight:400;transform:scaleX(0.94);transform-origin:0 0;">IT-department</div>
<svg style="position:absolute;left:787.55px;top:556.95px;overflow:visible" width="9.5" height="9.5" viewBox="0 0 9.5 9.5"><circle cx="4.75" cy="4.75" r="4.75" fill="#5bc940"/></svg>
<div style="position:absolute;left:842.7px;top:556.6px;width:27.3px;height:11.8px;background:#2a9a2e;border-radius:3px;"></div>
<div class="t" style="left:806.4px;width:100px;text-align:center;top:558.87px;font-size:7.6px;color:#fff;font-weight:700;transform:scaleX(0.88);transform-origin:50% 0;text-shadow:0 0 1px rgba(0,0,0,0.7),0.5px 0.5px 0.5px rgba(0,0,0,0.6);">1 Low</div>
<div class="t" style="left:907.3px;width:100px;text-align:center;top:556.97px;font-size:9.6px;color:#505050;font-weight:400;transform:scaleX(0.94);transform-origin:50% 0;">2</div>
<div style="position:absolute;left:78px;top:576.5px;width:925px;height:27.5px;background:#e8e8e8;box-shadow:inset 0 1px 0 #e3e3e3, inset 0 -1px 0 #e4e4e4;"></div>
<svg style="position:absolute;left:82.8px;top:585.2px;overflow:visible" width="12" height="12" viewBox="0 0 12 12"><rect x="0.6" y="0.6" width="10.4" height="10.4" rx="1.3" fill="none" stroke="#5c5c5c" stroke-width="1.1"/><path d="M3 5.8H8.6" stroke="#3a3a3a" stroke-width="0.95"/><path d="M5.8 3V8.6" stroke="#3a3a3a" stroke-width="0.95"/></svg>
<div class="t" style="left:107.6px;top:583.97px;font-size:9.6px;color:#505050;font-weight:400;transform:scaleX(0.94);transform-origin:0 0;">3</div>
<div class="t" style="left:172.8px;top:583.97px;font-size:9.6px;color:#505050;font-weight:400;transform:scaleX(0.94);transform-origin:0 0;">Software</div>
<div class="t" style="left:263.0px;top:583.97px;font-size:9.6px;color:#505050;font-weight:400;transform:scaleX(0.94);transform-origin:0 0;">Office software</div>
<div class="t" style="left:367.6px;top:583.97px;font-size:9.6px;color:#505050;font-weight:400;transform:scaleX(0.94);transform-origin:0 0;">Cybsis</div>
<div class="t" style="left:433.0px;top:583.97px;font-size:9.6px;color:#505050;font-weight:400;transform:scaleX(0.94);transform-origin:0 0;">Digital</div>
<div class="t" style="left:632.4px;top:583.97px;font-size:9.6px;color:#505050;font-weight:400;transform:scaleX(0.94);transform-origin:0 0;">2000</div>
<svg style="position:absolute;left:685px;top:585.0px;overflow:visible" width="11" height="8" viewBox="0 0 11 8"><g fill="#222"><circle cx="2.7" cy="2.6" r="1.55"/><circle cx="7" cy="2.2" r="1.85"/><path d="M3.5 7.2Q3.5 4.4 6.9 4.3Q10.2 4.4 10.2 7.2Z"/><path d="M0.1 7.2Q0.1 4.8 2.6 4.7Q3.5 4.7 4.1 5Q2.7 5.8 2.8 7.2Z"/></g></svg>
<div class="t" style="left:701.8px;top:583.97px;font-size:9.6px;color:#505050;font-weight:400;transform:scaleX(0.94);transform-origin:0 0;">Administrator</div>
<svg style="position:absolute;left:787.55px;top:583.95px;overflow:visible" width="9.5" height="9.5" viewBox="0 0 9.5 9.5"><circle cx="4.75" cy="4.75" r="4.75" fill="#5bc940"/><rect x="4.25" y="2.15" width="1" height="3" fill="#fff" opacity="0.6"/><rect x="4.25" y="6.05" width="1" height="1" fill="#fff" opacity="0.6"/></svg>
<div class="t" style="left:907.3px;width:100px;text-align:center;top:583.97px;font-size:9.6px;color:#505050;font-weight:400;transform:scaleX(0.94);transform-origin:50% 0;">0</div>
<svg style="position:absolute;left:82.8px;top:612.2px;overflow:visible" width="12" height="12" viewBox="0 0 12 12"><rect x="0.6" y="0.6" width="10.4" height="10.4" rx="1.3" fill="none" stroke="#5c5c5c" stroke-width="1.1"/><path d="M3 5.8H8.6" stroke="#3a3a3a" stroke-width="0.95"/><path d="M5.8 3V8.6" stroke="#3a3a3a" stroke-width="0.95"/></svg>
<div class="t" style="left:107.6px;top:610.97px;font-size:9.6px;color:#505050;font-weight:400;transform:scaleX(0.94);transform-origin:0 0;">0</div>
<div class="t" style="left:172.8px;top:610.97px;font-size:9.6px;color:#505050;font-weight:400;transform:scaleX(0.94);transform-origin:0 0;">ICT devices</div>
<div class="t" style="left:263.0px;top:610.97px;font-size:9.6px;color:#505050;font-weight:400;transform:scaleX(0.94);transform-origin:0 0;">Laptops (Windows)</div>
<div class="t" style="left:367.6px;top:610.97px;font-size:9.6px;color:#505050;font-weight:400;transform:scaleX(0.94);transform-origin:0 0;">Cybsis</div>
<div class="t" style="left:433.0px;top:610.97px;font-size:9.6px;color:#505050;font-weight:400;transform:scaleX(0.94);transform-origin:0 0;">Mobile</div>
<div class="t" style="left:632.4px;top:610.97px;font-size:9.6px;color:#505050;font-weight:400;transform:scaleX(0.94);transform-origin:0 0;">8922</div>
<svg style="position:absolute;left:685px;top:612.0px;overflow:visible" width="11" height="8" viewBox="0 0 11 8"><g fill="#222"><circle cx="2.7" cy="2.6" r="1.55"/><circle cx="7" cy="2.2" r="1.85"/><path d="M3.5 7.2Q3.5 4.4 6.9 4.3Q10.2 4.4 10.2 7.2Z"/><path d="M0.1 7.2Q0.1 4.8 2.6 4.7Q3.5 4.7 4.1 5Q2.7 5.8 2.8 7.2Z"/></g></svg>
<div class="t" style="left:701.8px;top:610.97px;font-size:9.6px;color:#505050;font-weight:400;transform:scaleX(0.94);transform-origin:0 0;">IT-department</div>
<svg style="position:absolute;left:787.55px;top:610.95px;overflow:visible" width="9.5" height="9.5" viewBox="0 0 9.5 9.5"><circle cx="4.75" cy="4.75" r="4.75" fill="#5bc940"/><rect x="4.25" y="2.15" width="1" height="3" fill="#fff" opacity="0.6"/><rect x="4.25" y="6.05" width="1" height="1" fill="#fff" opacity="0.6"/></svg>
<div class="t" style="left:907.3px;width:100px;text-align:center;top:610.97px;font-size:9.6px;color:#505050;font-weight:400;transform:scaleX(0.94);transform-origin:50% 0;">0</div>
<div style="position:absolute;left:78px;top:549.2px;width:925px;height:1px;background:#e4e6e7;"></div>
<div style="position:absolute;left:78px;top:630.2px;width:925px;height:1px;background:#e4e6e7;"></div>
<div style="position:absolute;left:508.1px;top:339.9px;width:73.6px;height:17.6px;border:1px solid #9dbdf2;border-radius:3px;box-sizing:border-box;"></div>
<svg style="position:absolute;left:512.5px;top:343.8px;overflow:visible" width="9" height="9" viewBox="0 0 9 9"><circle cx="4.3" cy="4.5" r="3.7" fill="none" stroke="#3079ee" stroke-width="0.9"/><path d="M4.3 2.6V6.4M2.4 4.5H6.2" stroke="#3079ee" stroke-width="0.9"/></svg>
<div class="t" style="left:525.9px;top:345.09px;font-size:8.4px;color:#3079ee;font-weight:700;transform:scaleX(0.9);transform-origin:0 0;">Add sub asset</div>
<div class="t" style="left:92.8px;top:360.98px;font-size:9px;color:#222;font-weight:700;transform:scaleX(0.95);transform-origin:0 0;">Inventory nr</div>
<div class="t" style="left:161.0px;top:360.98px;font-size:9px;color:#222;font-weight:700;transform:scaleX(0.95);transform-origin:0 0;">Name</div>
<div class="t" style="left:313.0px;top:360.98px;font-size:9px;color:#222;font-weight:700;transform:scaleX(0.95);transform-origin:0 0;">Location</div>
<div class="t" style="left:370.5px;top:360.98px;font-size:9px;color:#222;font-weight:700;transform:scaleX(0.95);transform-origin:0 0;">Price</div>
<div class="t" style="left:402.3px;top:360.98px;font-size:9px;color:#222;font-weight:700;transform:scaleX(0.95);transform-origin:0 0;">Responsible</div>
<div class="t" style="left:493.6px;top:360.98px;font-size:9px;color:#222;font-weight:700;transform:scaleX(0.95);transform-origin:0 0;">Status</div>
<div class="t" style="left:523.9px;top:360.98px;font-size:9px;color:#222;font-weight:700;transform:scaleX(0.95);transform-origin:0 0;">Comment</div>
<div class="t" style="left:666.3px;top:360.98px;font-size:9px;color:#222;font-weight:700;transform:scaleX(0.95);transform-origin:0 0;">IMEI</div>
<div class="t" style="left:741.6px;top:360.98px;font-size:9px;color:#222;font-weight:700;transform:scaleX(0.95);transform-origin:0 0;">Insurance</div>
<div class="t" style="left:786.6px;top:360.98px;font-size:9px;color:#222;font-weight:700;transform:scaleX(0.95);transform-origin:0 0;">Status</div>
<div class="t" style="left:840.3px;top:360.98px;font-size:9px;color:#222;font-weight:700;transform:scaleX(0.95);transform-origin:0 0;">Usage</div>
<div class="t" style="left:937.6px;top:360.98px;font-size:9px;color:#222;font-weight:700;transform:scaleX(0.95);transform-origin:0 0;">Bought</div>
<div style="position:absolute;left:92px;top:372.4px;width:906px;height:163.3px;background:#dee8f5;"></div>
<div class="t" style="left:96.6px;top:379.69px;font-size:9.7px;color:#3079ee;font-weight:400;transform:scaleX(0.94);transform-origin:0 0;">Smartphones</div>
<div class="t" style="left:164.5px;top:379.69px;font-size:9.7px;color:#3079ee;font-weight:400;transform:scaleX(0.94);transform-origin:0 0;">iPhone 16 pro 256GB</div>
<div class="t" style="left:316.8px;top:379.69px;font-size:9.7px;color:#3079ee;font-weight:400;transform:scaleX(0.94);transform-origin:0 0;">Mobile</div>
<div class="t" style="left:375.0px;top:379.69px;font-size:9.7px;color:#3079ee;font-weight:400;transform:scaleX(0.94);transform-origin:0 0;">1000</div>
<svg style="position:absolute;left:407.2px;top:380.4px;overflow:visible" width="8" height="8" viewBox="0 0 8 8"><circle cx="3.6" cy="1.9" r="1.9" fill="#5bc940"/><path d="M0 7.2Q0 4.6 3.6 4.5Q7.2 4.6 7.2 7.2Z" fill="#5bc940"/></svg>
<div class="t" style="left:422.4px;top:379.69px;font-size:9.7px;color:#3079ee;font-weight:400;transform:scaleX(0.94);transform-origin:0 0;">Kerto Kangur</div>
<svg style="position:absolute;left:498.09999999999997px;top:379.09999999999997px;overflow:visible" width="9.2" height="9.2" viewBox="0 0 9.2 9.2"><circle cx="4.6" cy="4.6" r="4.6" fill="#5bc940"/></svg>
<div class="t" style="left:527.8px;top:379.69px;font-size:9.7px;color:#3079ee;font-weight:400;transform:scaleX(0.94);transform-origin:0 0;">New</div>
<div class="t" style="left:670.4px;top:379.69px;font-size:9.7px;color:#3079ee;font-weight:400;transform:scaleX(0.94);transform-origin:0 0;">634123763414</div>
<svg style="position:absolute;left:745.6px;top:379.09999999999997px;overflow:visible" width="9.2" height="9.2" viewBox="0 0 9.2 9.2"><circle cx="4.6" cy="4.6" r="4.6" fill="#5bc940"/></svg>
<div class="t" style="left:790.0px;top:379.69px;font-size:9.7px;color:#3079ee;font-weight:400;transform:scaleX(0.94);transform-origin:0 0;">In use</div>
<div class="t" style="left:844.4px;top:379.69px;font-size:9.7px;color:#3079ee;font-weight:400;transform:scaleX(0.94);transform-origin:0 0;">Handed over, signed</div>
<div class="t" style="left:941.4px;top:379.69px;font-size:9.7px;color:#3079ee;font-weight:400;transform:scaleX(0.99);transform-origin:0 0;">12/24/2025</div>
<div style="position:absolute;left:92px;top:395.22999999999996px;width:906px;height:1px;background:#d9dee7;"></div>
<div class="t" style="left:96.6px;top:403.02px;font-size:9.7px;color:#3079ee;font-weight:400;transform:scaleX(0.94);transform-origin:0 0;">Smartphones</div>
<div class="t" style="left:164.5px;top:403.02px;font-size:9.7px;color:#3079ee;font-weight:400;transform:scaleX(0.94);transform-origin:0 0;">iPhone 17 Pro Max, 2 TB, silver</div>
<div class="t" style="left:316.8px;top:403.02px;font-size:9.7px;color:#3079ee;font-weight:400;transform:scaleX(0.94);transform-origin:0 0;">Mobile</div>
<div class="t" style="left:375.0px;top:403.02px;font-size:9.7px;color:#3079ee;font-weight:400;transform:scaleX(0.94);transform-origin:0 0;">1400</div>
<svg style="position:absolute;left:407.2px;top:403.72999999999996px;overflow:visible" width="8" height="8" viewBox="0 0 8 8"><circle cx="3.6" cy="1.9" r="1.9" fill="#5bc940"/><path d="M0 7.2Q0 4.6 3.6 4.5Q7.2 4.6 7.2 7.2Z" fill="#5bc940"/></svg>
<div class="t" style="left:422.4px;top:403.02px;font-size:9.7px;color:#3079ee;font-weight:400;transform:scaleX(0.94);transform-origin:0 0;">Valdur Haamer</div>
<svg style="position:absolute;left:498.09999999999997px;top:402.42999999999995px;overflow:visible" width="9.2" height="9.2" viewBox="0 0 9.2 9.2"><circle cx="4.6" cy="4.6" r="4.6" fill="#5bc940"/></svg>
<div class="t" style="left:527.8px;top:403.02px;font-size:9.7px;color:#3079ee;font-weight:400;transform:scaleX(0.94);transform-origin:0 0;">Small scratches on the screen.</div>
<div class="t" style="left:670.4px;top:403.02px;font-size:9.7px;color:#3079ee;font-weight:400;transform:scaleX(0.94);transform-origin:0 0;">635234135246</div>
<svg style="position:absolute;left:745.6px;top:402.42999999999995px;overflow:visible" width="9.2" height="9.2" viewBox="0 0 9.2 9.2"><circle cx="4.6" cy="4.6" r="4.6" fill="#5bc940"/></svg>
<div class="t" style="left:790.0px;top:403.02px;font-size:9.7px;color:#3079ee;font-weight:400;transform:scaleX(0.94);transform-origin:0 0;">In use</div>
<div class="t" style="left:844.4px;top:403.02px;font-size:9.7px;color:#3079ee;font-weight:400;transform:scaleX(0.94);transform-origin:0 0;">Handed over, signed</div>
<div class="t" style="left:941.4px;top:403.02px;font-size:9.7px;color:#3079ee;font-weight:400;transform:scaleX(0.99);transform-origin:0 0;">08/05/2025</div>
<div style="position:absolute;left:92px;top:418.55999999999995px;width:906px;height:1px;background:#d9dee7;"></div>
<div class="t" style="left:96.6px;top:426.35px;font-size:9.7px;color:#3079ee;font-weight:400;transform:scaleX(0.94);transform-origin:0 0;">Smartphones</div>
<div class="t" style="left:164.5px;top:426.35px;font-size:9.7px;color:#3079ee;font-weight:400;transform:scaleX(0.94);transform-origin:0 0;">iPhone 17, 512 GB, black</div>
<div class="t" style="left:316.8px;top:426.35px;font-size:9.7px;color:#3079ee;font-weight:400;transform:scaleX(0.94);transform-origin:0 0;">Mobile</div>
<div class="t" style="left:375.0px;top:426.35px;font-size:9.7px;color:#3079ee;font-weight:400;transform:scaleX(0.94);transform-origin:0 0;">1200</div>
<svg style="position:absolute;left:407.2px;top:427.05999999999995px;overflow:visible" width="8" height="8" viewBox="0 0 8 8"><circle cx="3.6" cy="1.9" r="1.9" fill="#5bc940"/><path d="M0 7.2Q0 4.6 3.6 4.5Q7.2 4.6 7.2 7.2Z" fill="#5bc940"/></svg>
<div class="t" style="left:422.4px;top:426.35px;font-size:9.7px;color:#3079ee;font-weight:400;transform:scaleX(0.94);transform-origin:0 0;">Nele Idavain</div>
<svg style="position:absolute;left:498.09999999999997px;top:425.75999999999993px;overflow:visible" width="9.2" height="9.2" viewBox="0 0 9.2 9.2"><circle cx="4.6" cy="4.6" r="4.6" fill="#5bc940"/></svg>
<div class="t" style="left:527.8px;top:426.35px;font-size:9.7px;color:#3079ee;font-weight:400;transform:scaleX(0.94);transform-origin:0 0;">New</div>
<div class="t" style="left:670.4px;top:426.35px;font-size:9.7px;color:#3079ee;font-weight:400;transform:scaleX(0.94);transform-origin:0 0;">745624535245</div>
<svg style="position:absolute;left:745.6px;top:425.75999999999993px;overflow:visible" width="9.2" height="9.2" viewBox="0 0 9.2 9.2"><circle cx="4.6" cy="4.6" r="4.6" fill="#f0541c"/></svg>
<div class="t" style="left:790.0px;top:426.35px;font-size:9.7px;color:#3079ee;font-weight:400;transform:scaleX(0.94);transform-origin:0 0;">Out of use</div>
<div class="t" style="left:844.4px;top:426.35px;font-size:9.7px;color:#3079ee;font-weight:400;transform:scaleX(0.94);transform-origin:0 0;">Not handed over</div>
<div class="t" style="left:941.4px;top:426.35px;font-size:9.7px;color:#3079ee;font-weight:400;transform:scaleX(0.99);transform-origin:0 0;">01/09/2026</div>
<div style="position:absolute;left:92px;top:441.89px;width:906px;height:1px;background:#d9dee7;"></div>
<div class="t" style="left:96.6px;top:449.68px;font-size:9.7px;color:#3079ee;font-weight:400;transform:scaleX(0.94);transform-origin:0 0;">Smartphones</div>
<div class="t" style="left:164.5px;top:449.68px;font-size:9.7px;color:#3079ee;font-weight:400;transform:scaleX(0.94);transform-origin:0 0;">iPhone 17 Pro, 256 GB, deep blue</div>
<div class="t" style="left:316.8px;top:449.68px;font-size:9.7px;color:#3079ee;font-weight:400;transform:scaleX(0.94);transform-origin:0 0;">Mobile</div>
<div class="t" style="left:375.0px;top:449.68px;font-size:9.7px;color:#3079ee;font-weight:400;transform:scaleX(0.94);transform-origin:0 0;">1500</div>
<svg style="position:absolute;left:407.2px;top:450.39px;overflow:visible" width="8" height="8" viewBox="0 0 8 8"><circle cx="3.6" cy="1.9" r="1.9" fill="#5bc940"/><path d="M0 7.2Q0 4.6 3.6 4.5Q7.2 4.6 7.2 7.2Z" fill="#5bc940"/></svg>
<div class="t" style="left:422.4px;top:449.68px;font-size:9.7px;color:#3079ee;font-weight:400;transform:scaleX(0.94);transform-origin:0 0;">Maie Haldus</div>
<svg style="position:absolute;left:498.09999999999997px;top:449.09px;overflow:visible" width="9.2" height="9.2" viewBox="0 0 9.2 9.2"><circle cx="4.6" cy="4.6" r="4.6" fill="#f0541c"/></svg>
<div class="t" style="left:527.8px;top:449.68px;font-size:9.7px;color:#3079ee;font-weight:400;transform:scaleX(0.94);transform-origin:0 0;">In repairs, not turning on</div>
<div class="t" style="left:670.4px;top:449.68px;font-size:9.7px;color:#3079ee;font-weight:400;transform:scaleX(0.94);transform-origin:0 0;">513534764571</div>
<svg style="position:absolute;left:745.6px;top:449.09px;overflow:visible" width="9.2" height="9.2" viewBox="0 0 9.2 9.2"><circle cx="4.6" cy="4.6" r="4.6" fill="#5bc940"/></svg>
<div class="t" style="left:790.0px;top:449.68px;font-size:9.7px;color:#3079ee;font-weight:400;transform:scaleX(0.94);transform-origin:0 0;">Repair</div>
<div class="t" style="left:844.4px;top:449.68px;font-size:9.7px;color:#3079ee;font-weight:400;transform:scaleX(0.94);transform-origin:0 0;">-</div>
<div class="t" style="left:941.4px;top:449.68px;font-size:9.7px;color:#3079ee;font-weight:400;transform:scaleX(0.99);transform-origin:0 0;">11/04/2025</div>
<div style="position:absolute;left:92px;top:465.21999999999997px;width:906px;height:1px;background:#d9dee7;"></div>
<div class="t" style="left:96.6px;top:473.01px;font-size:9.7px;color:#3079ee;font-weight:400;transform:scaleX(0.94);transform-origin:0 0;">Smartphones</div>
<div class="t" style="left:164.5px;top:473.01px;font-size:9.7px;color:#3079ee;font-weight:400;transform:scaleX(0.94);transform-origin:0 0;">iPhone 15, 128 GB, pink</div>
<div class="t" style="left:316.8px;top:473.01px;font-size:9.7px;color:#3079ee;font-weight:400;transform:scaleX(0.94);transform-origin:0 0;">CISO office</div>
<div class="t" style="left:375.0px;top:473.01px;font-size:9.7px;color:#3079ee;font-weight:400;transform:scaleX(0.94);transform-origin:0 0;">1240</div>
<svg style="position:absolute;left:405.8px;top:473.32px;overflow:visible" width="11" height="8" viewBox="0 0 11 8"><g fill="#2f70f0"><circle cx="2.7" cy="2.6" r="1.55"/><circle cx="7" cy="2.2" r="1.85"/><path d="M3.5 7.2Q3.5 4.4 6.9 4.3Q10.2 4.4 10.2 7.2Z"/><path d="M0.1 7.2Q0.1 4.8 2.6 4.7Q3.5 4.7 4.1 5Q2.7 5.8 2.8 7.2Z"/></g></svg>
<div class="t" style="left:422.4px;top:473.01px;font-size:9.7px;color:#3079ee;font-weight:400;transform:scaleX(0.94);transform-origin:0 0;">CISO</div>
<svg style="position:absolute;left:498.09999999999997px;top:472.41999999999996px;overflow:visible" width="9.2" height="9.2" viewBox="0 0 9.2 9.2"><circle cx="4.6" cy="4.6" r="4.6" fill="#5bc940"/></svg>
<div class="t" style="left:527.8px;top:473.01px;font-size:9.7px;color:#3079ee;font-weight:400;transform:scaleX(0.94);transform-origin:0 0;">For CISO role only.</div>
<div class="t" style="left:670.4px;top:473.01px;font-size:9.7px;color:#3079ee;font-weight:400;transform:scaleX(0.94);transform-origin:0 0;">152534764443</div>
<svg style="position:absolute;left:745.6px;top:472.41999999999996px;overflow:visible" width="9.2" height="9.2" viewBox="0 0 9.2 9.2"><circle cx="4.6" cy="4.6" r="4.6" fill="#5bc940"/></svg>
<div class="t" style="left:790.0px;top:473.01px;font-size:9.7px;color:#3079ee;font-weight:400;transform:scaleX(0.94);transform-origin:0 0;">In use</div>
<div class="t" style="left:844.4px;top:473.01px;font-size:9.7px;color:#3079ee;font-weight:400;transform:scaleX(0.94);transform-origin:0 0;">Handed over, signed</div>
<div class="t" style="left:941.4px;top:473.01px;font-size:9.7px;color:#3079ee;font-weight:400;transform:scaleX(0.99);transform-origin:0 0;">02/08/2024</div>
<div style="position:absolute;left:92px;top:488.54999999999995px;width:906px;height:1px;background:#d9dee7;"></div>
<div class="t" style="left:96.6px;top:496.34px;font-size:9.7px;color:#3079ee;font-weight:400;transform:scaleX(0.94);transform-origin:0 0;">Smartphones</div>
<div class="t" style="left:164.5px;top:496.34px;font-size:9.7px;color:#3079ee;font-weight:400;transform:scaleX(0.94);transform-origin:0 0;">iPhone 15, 128 GB, silver</div>
<div class="t" style="left:316.8px;top:496.34px;font-size:9.7px;color:#3079ee;font-weight:400;transform:scaleX(0.94);transform-origin:0 0;">Mobile</div>
<div class="t" style="left:375.0px;top:496.34px;font-size:9.7px;color:#3079ee;font-weight:400;transform:scaleX(0.94);transform-origin:0 0;">1499</div>
<svg style="position:absolute;left:407.2px;top:497.04999999999995px;overflow:visible" width="8" height="8" viewBox="0 0 8 8"><circle cx="3.6" cy="1.9" r="1.9" fill="#5bc940"/><path d="M0 7.2Q0 4.6 3.6 4.5Q7.2 4.6 7.2 7.2Z" fill="#5bc940"/></svg>
<div class="t" style="left:422.4px;top:496.34px;font-size:9.7px;color:#3079ee;font-weight:400;transform:scaleX(0.94);transform-origin:0 0;">Valdur Haamer</div>
<svg style="position:absolute;left:498.09999999999997px;top:495.74999999999994px;overflow:visible" width="9.2" height="9.2" viewBox="0 0 9.2 9.2"><circle cx="4.6" cy="4.6" r="4.6" fill="#5bc940"/></svg>
<div class="t" style="left:527.8px;top:496.34px;font-size:9.7px;color:#3079ee;font-weight:400;transform:scaleX(0.94);transform-origin:0 0;"></div>
<div class="t" style="left:670.4px;top:496.34px;font-size:9.7px;color:#3079ee;font-weight:400;transform:scaleX(0.94);transform-origin:0 0;">123124121256</div>
<svg style="position:absolute;left:745.6px;top:495.74999999999994px;overflow:visible" width="9.2" height="9.2" viewBox="0 0 9.2 9.2"><circle cx="4.6" cy="4.6" r="4.6" fill="#5bc940"/></svg>
<div class="t" style="left:790.0px;top:496.34px;font-size:9.7px;color:#3079ee;font-weight:400;transform:scaleX(0.94);transform-origin:0 0;">In use</div>
<div class="t" style="left:844.4px;top:496.34px;font-size:9.7px;color:#3079ee;font-weight:400;transform:scaleX(0.94);transform-origin:0 0;">Handed over, signed</div>
<div class="t" style="left:941.4px;top:496.34px;font-size:9.7px;color:#3079ee;font-weight:400;transform:scaleX(0.99);transform-origin:0 0;">01/08/2025</div>
<div style="position:absolute;left:92px;top:511.88px;width:906px;height:1px;background:#d9dee7;"></div>
<div class="t" style="left:96.6px;top:519.67px;font-size:9.7px;color:#3079ee;font-weight:400;transform:scaleX(0.94);transform-origin:0 0;">Smartphones</div>
<div class="t" style="left:164.5px;top:519.67px;font-size:9.7px;color:#3079ee;font-weight:400;transform:scaleX(0.94);transform-origin:0 0;">Apple iPhone 17, 256 GB, white</div>
<div class="t" style="left:316.8px;top:519.67px;font-size:9.7px;color:#3079ee;font-weight:400;transform:scaleX(0.94);transform-origin:0 0;">Mobile</div>
<div class="t" style="left:375.0px;top:519.67px;font-size:9.7px;color:#3079ee;font-weight:400;transform:scaleX(0.94);transform-origin:0 0;">1244</div>
<svg style="position:absolute;left:407.2px;top:520.38px;overflow:visible" width="8" height="8" viewBox="0 0 8 8"><circle cx="3.6" cy="1.9" r="1.9" fill="#5bc940"/><path d="M0 7.2Q0 4.6 3.6 4.5Q7.2 4.6 7.2 7.2Z" fill="#5bc940"/></svg>
<div class="t" style="left:422.4px;top:519.67px;font-size:9.7px;color:#3079ee;font-weight:400;transform:scaleX(0.94);transform-origin:0 0;">John Jones</div>
<svg style="position:absolute;left:498.09999999999997px;top:519.0799999999999px;overflow:visible" width="9.2" height="9.2" viewBox="0 0 9.2 9.2"><circle cx="4.6" cy="4.6" r="4.6" fill="#f0541c"/></svg>
<div class="t" style="left:527.8px;top:519.67px;font-size:9.7px;color:#3079ee;font-weight:400;transform:scaleX(0.94);transform-origin:0 0;">New</div>
<div class="t" style="left:670.4px;top:519.67px;font-size:9.7px;color:#3079ee;font-weight:400;transform:scaleX(0.94);transform-origin:0 0;">123412512512</div>
<svg style="position:absolute;left:745.6px;top:519.0799999999999px;overflow:visible" width="9.2" height="9.2" viewBox="0 0 9.2 9.2"><circle cx="4.6" cy="4.6" r="4.6" fill="#f0541c"/></svg>
<div class="t" style="left:790.0px;top:519.67px;font-size:9.7px;color:#3079ee;font-weight:400;transform:scaleX(0.94);transform-origin:0 0;">Out of use</div>
<div class="t" style="left:844.4px;top:519.67px;font-size:9.7px;color:#3079ee;font-weight:400;transform:scaleX(0.94);transform-origin:0 0;">On hold</div>
<div class="t" style="left:941.4px;top:519.67px;font-size:9.7px;color:#3079ee;font-weight:400;transform:scaleX(0.99);transform-origin:0 0;">01/01/2026</div>
<svg style="position:absolute;left:475px;top:664px;overflow:visible" width="14" height="14" viewBox="0 0 14 14"><g fill="none" stroke="#c3c8cd" stroke-width="1.1"><path d="M3 2V11.5M8.8 3L5.3 6.75L8.8 10.5"/></g></svg>
<svg style="position:absolute;left:492px;top:664px;overflow:visible" width="12" height="14" viewBox="0 0 12 14"><g fill="none" stroke="#c3c8cd" stroke-width="1.1"><path d="M8 2L3.6 6.75L8 11.5"/></g></svg>
<div class="t" style="left:507.4px;top:667.58px;font-size:9px;color:#5a5a5a;font-weight:400;transform:scaleX(0.94);transform-origin:0 0;">1 / 1</div>
<svg style="position:absolute;left:529px;top:664px;overflow:visible" width="12" height="14" viewBox="0 0 12 14"><g fill="none" stroke="#c3c8cd" stroke-width="1.1"><path d="M3 2L7.4 6.75L3 11.5"/></g></svg>
<svg style="position:absolute;left:545px;top:664px;overflow:visible" width="14" height="14" viewBox="0 0 14 14"><g fill="none" stroke="#c3c8cd" stroke-width="1.1"><path d="M9.5 2V11.5M3 3L6.5 6.75L3 10.5"/></g></svg>
<div style="position:absolute;left:569.6px;top:662.6px;width:38.4px;height:16.6px;background:#f4f5f5;border-radius:3px;box-shadow:0 0 0 0.5px #e6e8e9;"></div>
<div class="t" style="left:574.4px;top:667.18px;font-size:9px;color:#2a2a2a;font-weight:400;-webkit-text-stroke:0.25px #2a2a2a;">50</div>
<svg style="position:absolute;left:592px;top:667px;overflow:visible" width="10" height="7" viewBox="0 0 10 7"><path d="M1.8 1.8L4.9 4.9L8 1.8" fill="none" stroke="#444" stroke-width="1.2"/></svg>
</body></html>
